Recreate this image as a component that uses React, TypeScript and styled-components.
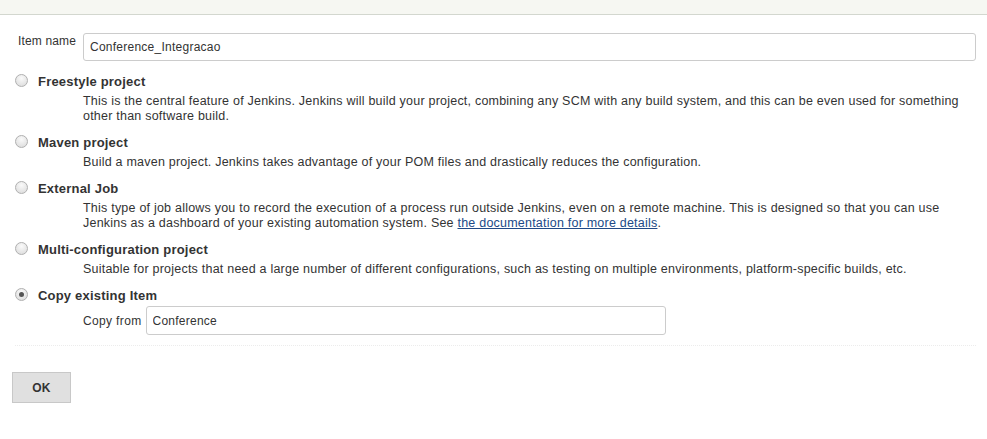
import styled, { createGlobalStyle } from "styled-components";

const GlobalStyle = createGlobalStyle`
  body {
    margin: 0;
    background: #fff;
    color: #333;
    font-family: "Liberation Sans", Arial, Helvetica, sans-serif;
    font-size: 12px;
    letter-spacing: 0.15px;
  }
`

const TopBar = styled.div`
  height: 14px;
  background: #f6f7f2;
  border-bottom: 1px solid #d3d7cf;
`

const Form = styled.form`
  padding: 18px 11px 0 12px;
`

const NameRow = styled.div`
  display: flex;
  align-items: flex-start;
  margin-bottom: 13px;
`

const NameLabel = styled.label`
  width: 65px;
  padding-left: 6px;
  margin-top: 1px;
  line-height: 15px;
  flex-shrink: 0;
`

const TextInput = styled.input<{ $width?: string }>`
  box-sizing: border-box;
  width: ${(p) => p.$width ?? "100%"};
  height: ${(p) => (p.$width ? "29px" : "28px")};
  border: 1px solid #ccc;
  border-radius: 3px;
  padding: 0 6px;
  font-family: inherit;
  font-size: 12px;
  letter-spacing: 0.25px;
  color: #333;
  background: #fff;
  outline: none;
`

const Option = styled.div`
  margin-bottom: 11px;
`

const OptionHeader = styled.label`
  display: flex;
  align-items: center;
  gap: 10px;
  line-height: 15px;
`

const Radio = styled.span<{ $checked?: boolean }>`
  box-sizing: border-box;
  width: 13px;
  height: 13px;
  margin: -3px 0 0 3px;
  border-radius: 50%;
  border: 1px solid #b0b0b0;
  background: radial-gradient(circle at 50% 30%, #fafafa 0%, #dedede 85%);
  display: flex;
  align-items: center;
  justify-content: center;
  flex-shrink: 0;

  &::after {
    content: "";
    display: ${(p) => (p.$checked ? "block" : "none")};
    width: 5px;
    height: 5px;
    border-radius: 50%;
    background: #555;
  }
`

const Title = styled.span`
  font-weight: bold;
  font-size: 13px;
  letter-spacing: 0.2px;
`

const Description = styled.div`
  margin-top: 5px;
  padding: 0 12px 0 71px;
  font-size: 12.5px;
  letter-spacing: 0.22px;
  line-height: 15px;
`

const Link = styled.a`
  color: #204a87;
  text-decoration: underline;
`

const CopyRow = styled.div`
  display: flex;
  align-items: center;
  gap: 4px;
  margin-top: 3px;
  padding-left: 71px;
`

const CopyLabel = styled.span`
  letter-spacing: 0.35px;
`

const Divider = styled.div`
  margin: 10px 0 0 3px;
  border-bottom: 1px dotted #ececec;
`

const Footer = styled.div`
  padding-top: 26px;
`

const Button = styled.button`
  width: 59px;
  height: 31px;
  border: 1px solid #c8c8c8;
  background: #e0e0e0;
  color: #333;
  font-family: inherit;
  font-weight: bold;
  font-size: 12px;
  letter-spacing: 0.2px;
  cursor: pointer;
`

const options = [
  {
    title: "Freestyle project",
    text: "This is the central feature of Jenkins. Jenkins will build your project, combining any SCM with any build system, and this can be even used for something other than software build.",
  },
  {
    title: "Maven project",
    text: "Build a maven project. Jenkins takes advantage of your POM files and drastically reduces the configuration.",
  },
  {
    title: "External Job",
    text: (
      <>
        This type of job allows you to record the execution of a process run outside Jenkins, even on a remote machine. This is designed so that you can use Jenkins as a dashboard of your existing automation system. See{" "}
        <Link href="#">the documentation for more details</Link>.
      </>
    ),
  },
  {
    title: "Multi-configuration project",
    text: "Suitable for projects that need a large number of different configurations, such as testing on multiple environments, platform-specific builds, etc.",
  },
]

export default function App() {
  return (
    <>
      <GlobalStyle />
      <TopBar />
      <Form onSubmit={(e) => e.preventDefault()}>
        <NameRow>
          <NameLabel>Item name</NameLabel>
          <TextInput defaultValue="Conference_Integracao" />
        </NameRow>
        {options.map((o) => (
          <Option key={o.title}>
            <OptionHeader>
              <Radio />
              <Title>{o.title}</Title>
            </OptionHeader>
            <Description>{o.text}</Description>
          </Option>
        ))}
        <div>
          <OptionHeader>
            <Radio $checked />
            <Title>Copy existing Item</Title>
          </OptionHeader>
          <CopyRow>
            <CopyLabel>Copy from</CopyLabel>
            <TextInput $width="520px" defaultValue="Conference" />
          </CopyRow>
        </div>
        <Divider />
        <Footer>
          <Button type="submit">OK</Button>
        </Footer>
      </Form>
    </>
  )
}
